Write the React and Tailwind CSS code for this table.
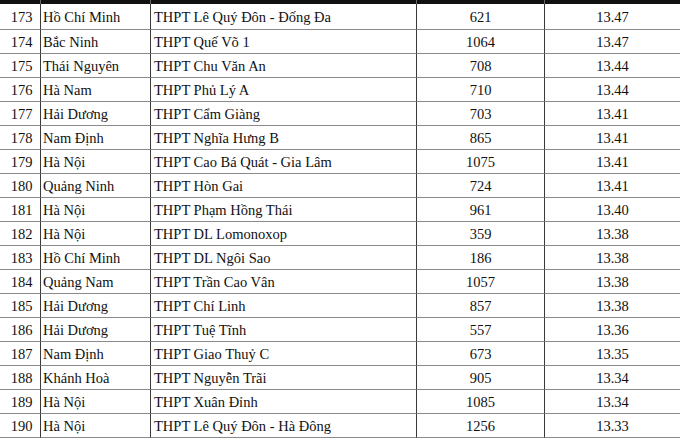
const rows = [
  [173, "Hồ Chí Minh", "THPT Lê Quý Đôn - Đống Đa", 621, "13.47"],
  [174, "Bắc Ninh", "THPT Quế Võ 1", 1064, "13.47"],
  [175, "Thái Nguyên", "THPT Chu Văn An", 708, "13.44"],
  [176, "Hà Nam", "THPT Phủ Lý A", 710, "13.44"],
  [177, "Hải Dương", "THPT Cẩm Giàng", 703, "13.41"],
  [178, "Nam Định", "THPT Nghĩa Hưng B", 865, "13.41"],
  [179, "Hà Nội", "THPT Cao Bá Quát - Gia Lâm", 1075, "13.41"],
  [180, "Quảng Ninh", "THPT Hòn Gai", 724, "13.41"],
  [181, "Hà Nội", "THPT Phạm Hồng Thái", 961, "13.40"],
  [182, "Hà Nội", "THPT DL Lomonoxop", 359, "13.38"],
  [183, "Hồ Chí Minh", "THPT DL Ngôi Sao", 186, "13.38"],
  [184, "Quảng Nam", "THPT Trần Cao Vân", 1057, "13.38"],
  [185, "Hải Dương", "THPT Chí Linh", 857, "13.38"],
  [186, "Hải Dương", "THPT Tuệ Tĩnh", 557, "13.36"],
  [187, "Nam Định", "THPT Giao Thuỷ C", 673, "13.35"],
  [188, "Khánh Hoà", "THPT Nguyễn Trãi", 905, "13.34"],
  [189, "Hà Nội", "THPT Xuân Đỉnh", 1085, "13.34"],
  [190, "Hà Nội", "THPT Lê Quý Đôn - Hà Đông", 1256, "13.33"],
];

const cols = "grid grid-cols-[41px_110px_266px_128px_1fr]";
const cell = "flex items-center pt-[2px] border-b border-b-[#8a8a8a] border-r border-r-[#3a3a3a]";

export default function App() {
  return (
    <div className="w-[680px] h-[440px] overflow-hidden bg-white text-[#111] text-[14.5px] leading-none font-['Liberation_Serif',serif]">
      {/* dark header edge */}
      <div className={`${cols} h-[4px] bg-[#111]`}>
        <div className="border-r border-r-[#666]" />
        <div className="border-r border-r-[#666]" />
        <div className="border-r border-r-[#666]" />
        <div className="border-r border-r-[#666]" />
        <div />
      </div>

      {rows.map(([rank, province, school, count, score], i) => (
        <div key={rank} className={`${cols} ${i === 0 ? "h-[26px]" : "h-[24px]"}`}>
          <div className={`${cell} justify-center pl-[3px]`}>{rank}</div>
          <div className={`${cell} pl-[2px]`}>{province}</div>
          <div className={`${cell} pl-[3px]`}>{school}</div>
          <div className={`${cell} justify-center`}>{count}</div>
          <div className="flex items-center justify-center pt-[2px] border-b border-b-[#8a8a8a]">{score}</div>
        </div>
      ))}
    </div>
  );
}
